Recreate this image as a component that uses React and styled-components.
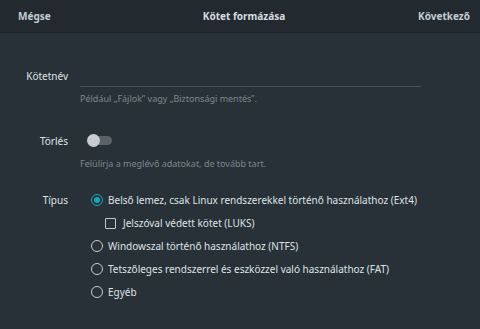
import React, { useState } from "react";
import styled, { createGlobalStyle } from "styled-components";

const GlobalStyle = createGlobalStyle`
  html, body {
    margin: 0;
    padding: 0;
    background: #283137;
  }
  body {
    font-family: "Noto Sans", "DejaVu Sans", sans-serif;
    font-size: 10px;
  }
`;

const Page = styled.div`
  width: 480px;
  height: 329px;
  background: #283137;
  overflow: hidden;
`;

const Header = styled.div`
  height: 32px;
  display: grid;
  grid-template-columns: 1fr auto 1fr;
  align-items: center;
  padding: 0 10px 0 18px;
  background: #222a30;
  border-bottom: 1px solid #1e252a;
`;

const HeaderButton = styled.span`
  font-weight: bold;
  color: #c3ccd4;
  font-size: 10px;
  justify-self: ${(p) => (p.$right ? "end" : "start")};
`;

const Title = styled.span`
  font-weight: bold;
  color: #d6dce1;
  font-size: 10px;
`;

const Form = styled.div`
  display: grid;
  grid-template-columns: 68px 1fr;
  column-gap: 12px;
  padding-top: 36px;
  padding-right: 59px;
`;

const Label = styled.div`
  text-align: right;
  color: #dfe3e6;
  font-size: 10px;
  line-height: 14px;
  margin-top: ${(p) => p.$top || 0}px;
`;

const Field = styled.div`
  margin-top: ${(p) => p.$top || 0}px;
`;

const NameInput = styled.input`
  display: block;
  width: 100%;
  box-sizing: border-box;
  height: 19px;
  background: transparent;
  border: none;
  border-bottom: 1px solid #485157;
  color: #e0e4e7;
  font: inherit;
  outline: none;
  padding: 0;
  margin-top: -1px;
`;

const Hint = styled.div`
  color: #7c878f;
  font-size: 9px;
  margin-top: ${(p) => p.$top || 0}px;
`;

const Switch = styled.div`
  position: relative;
  width: 25px;
  height: 14px;
  margin-left: 7px;
`;

const Track = styled.div`
  position: absolute;
  left: 3px;
  right: 0;
  top: 2px;
  height: 9px;
  border-radius: 5px;
  background: #5b6369;
`;

const Knob = styled.div`
  position: absolute;
  left: 0;
  top: 0;
  width: 13px;
  height: 13px;
  border-radius: 50%;
  background: #c8ccd0;
`;

const Options = styled.div`
  display: flex;
  flex-direction: column;
  gap: 9px;
  padding-left: 11px;
`;

const Option = styled.div`
  display: flex;
  align-items: center;
  gap: 5px;
  color: #dfe3e6;
  font-size: 10px;
  line-height: 14px;
  margin-left: ${(p) => p.$indent || 0}px;
`;

const Radio = styled.span`
  box-sizing: border-box;
  width: 12px;
  height: 12px;
  border-radius: 50%;
  border: 1px solid ${(p) => (p.$checked ? "#19a7b8" : "#c8ccd0")};
  display: flex;
  align-items: center;
  justify-content: center;
  flex-shrink: 0;

  &::after {
    content: "";
    display: ${(p) => (p.$checked ? "block" : "none")};
    width: 6px;
    height: 6px;
    border-radius: 50%;
    background: #19a7b8;
  }
`;

const Checkbox = styled.span`
  box-sizing: border-box;
  width: 11px;
  height: 11px;
  border: 1px solid #c3c8cc;
  border-radius: 1px;
  flex-shrink: 0;
  margin-right: 2px;
`;

const types = [
  "Belső lemez, csak Linux rendszerekkel történő használathoz (Ext4)",
  "Windowszal történő használathoz (NTFS)",
  "Tetszőleges rendszerrel és eszközzel való használathoz (FAT)",
  "Egyéb",
];

function App() {
  const [name, setName] = useState("");
  const [selected] = useState(0);

  return (
    <Page>
      <GlobalStyle />
      <Header>
        <HeaderButton>Mégse</HeaderButton>
        <Title>Kötet formázása</Title>
        <HeaderButton $right>Következő</HeaderButton>
      </Header>
      <Form>
        <Label $top={0}>Kötetnév</Label>
        <Field>
          <NameInput value={name} onChange={(e) => setName(e.target.value)} />
          <Hint $top={5}>Például „Fájlok” vagy „Biztonsági mentés”.</Hint>
        </Field>

        <Label $top={29}>Törlés</Label>
        <Field $top={29}>
          <Switch>
            <Track />
            <Knob />
          </Switch>
          <Hint $top={9}>Felülírja a meglévő adatokat, de tovább tart.</Hint>
        </Field>

        <Label $top={23}>Típus</Label>
        <Field $top={23}>
          <Options>
            <Option>
              <Radio $checked={selected === 0} />
              {types[0]}
            </Option>
            <Option $indent={14}>
              <Checkbox />
              Jelszóval védett kötet (LUKS)
            </Option>
            {types.slice(1).map((t, i) => (
              <Option key={t}>
                <Radio $checked={selected === i + 1} />
                {t}
              </Option>
            ))}
          </Options>
        </Field>
      </Form>
    </Page>
  );
}

export default App;
